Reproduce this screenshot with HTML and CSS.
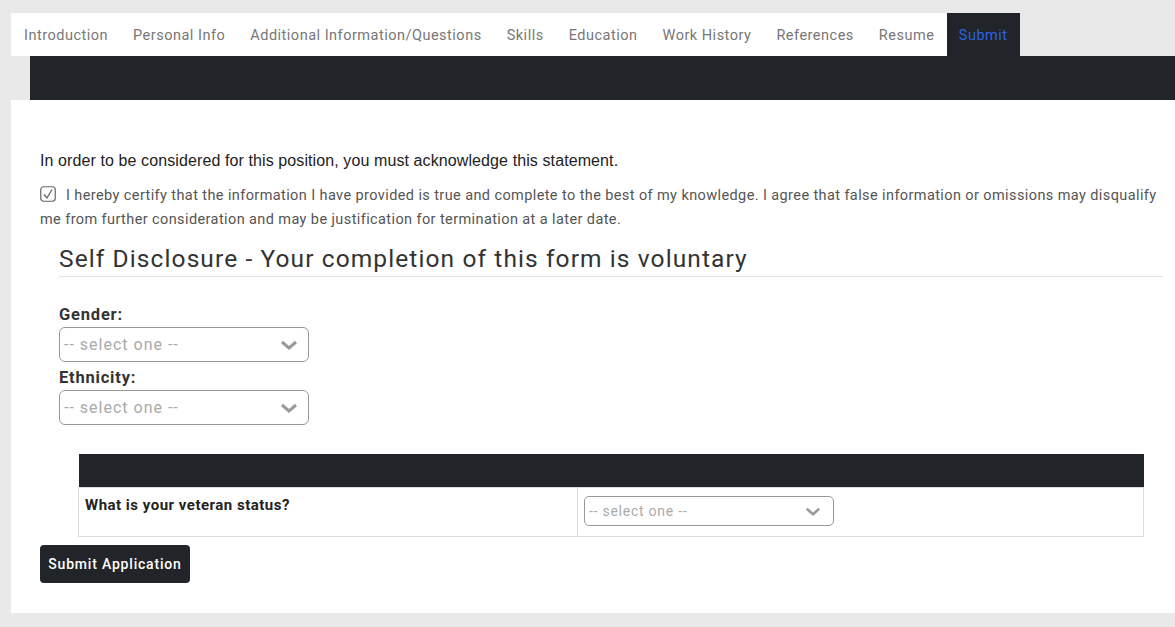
FILE: index.html
```html
<!DOCTYPE html>
<html>
<head>
    <title>Application - Submit</title>
    <link rel="stylesheet" href="styles.css">
</head>
<body>
    <!-- Step tabs -->
    <ul class="steps">
        <li class="step">Introduction</li>
        <li class="step">Personal Info</li>
        <li class="step">Additional Information/Questions</li>
        <li class="step">Skills</li>
        <li class="step">Education</li>
        <li class="step">Work History</li>
        <li class="step">References</li>
        <li class="step">Resume</li>
        <li class="step step-active">Submit</li>
    </ul>
    <div class="step-band"></div>

    <div class="panel">
        <p class="notice">In order to be considered for this position, you must acknowledge this statement.</p>
        <p class="certify">
            <svg class="check" width="16" height="16" viewBox="0 0 16 16">
                <rect x="0.75" y="0.75" width="14.5" height="14.5" rx="3" fill="none" stroke="#666" stroke-width="1.2"/>
                <path d="M4 8.5 L7 12 L12 3.5" fill="none" stroke="#666" stroke-width="1.3"/>
            </svg>
            I hereby certify that the information I have provided is true and complete to the best of my knowledge. I agree that false information or omissions may disqualify me from further consideration and may be justification for termination at a later date.
        </p>

        <div class="disclosure">
            <h2 class="disclosure-title">Self Disclosure - Your completion of this form is voluntary</h2>

            <div class="field">
                <label class="field-label">Gender:</label>
                <div class="select">
                    <span>-- select one --</span>
                    <svg width="18" height="10" viewBox="0 0 18 10"><path d="M2 2 L9 8 L16 2" fill="none" stroke="#9a9a9a" stroke-width="3"/></svg>
                </div>
            </div>
            <div class="field">
                <label class="field-label">Ethnicity:</label>
                <div class="select">
                    <span>-- select one --</span>
                    <svg width="18" height="10" viewBox="0 0 18 10"><path d="M2 2 L9 8 L16 2" fill="none" stroke="#9a9a9a" stroke-width="3"/></svg>
                </div>
            </div>

            <table class="vet-table">
                <thead>
                    <tr><th colspan="2"></th></tr>
                </thead>
                <tbody>
                    <tr>
                        <td class="vet-q">What is your veteran status?</td>
                        <td>
                            <div class="select select-sm">
                                <span>-- select one --</span>
                                <svg width="16" height="9" viewBox="0 0 18 10"><path d="M2 2 L9 8 L16 2" fill="none" stroke="#9a9a9a" stroke-width="3"/></svg>
                            </div>
                        </td>
                    </tr>
                </tbody>
            </table>
        </div>

        <button class="submit-btn">Submit Application</button>
    </div>
</body>
</html>
```

FILE: styles.css
```css
/* Page */
body {
    margin: 0;
    padding: 13px 0 14px 11px;
    background: #e9e9e9;
    font-family: "Roboto", "Liberation Sans", sans-serif;
    color: #333;
    width: 1250px;
}

/* Step tabs */
.steps {
    display: flex;
    list-style: none;
    margin: 0;
    padding: 0;
    height: 43px;
}

.step {
    background: #fff;
    color: #777;
    font-size: 14.5px;
    letter-spacing: 0.5px;
    padding: 2px 12.5px 0;
    line-height: 41px;
}

.step:first-child {
    padding-left: 13px;
}

.step-active {
    background: #212428;
    color: #2b62e6;
    padding: 2px 12px 0;
}

.step-band {
    height: 44px;
    margin-left: 19px;
    background: #212428;
}

/* Main panel */
.panel {
    background: #fff;
    padding: 52px 0 30px 29px;
}

.notice {
    font-family: "Liberation Sans", Arial, sans-serif;
    font-size: 16px;
    color: #222;
    margin: 0 0 14px;
    letter-spacing: 0.1px;
}

.certify {
    font-size: 14.5px;
    letter-spacing: 0.4px;
    line-height: 24px;
    color: #555;
    margin: 0;
    width: 1125px;
}

.check {
    vertical-align: -2px;
    margin-right: 6px;
}

/* Self disclosure */
.disclosure {
    padding-left: 19px;
    width: 1104px;
}

.disclosure-title {
    font-weight: 400;
    font-size: 24.5px;
    letter-spacing: 1.1px;
    color: #333;
    margin: 12px 0 0;
    padding-bottom: 3px;
    border-bottom: 1px solid #e3e3e3;
}

.field {
    margin-top: 28px;
}

.field + .field {
    margin-top: 6px;
}

.field-label {
    display: block;
    font-weight: 700;
    font-size: 16.5px;
    letter-spacing: 0.8px;
    line-height: 19px;
    color: #333;
    margin-bottom: 3px;
}

.select {
    display: flex;
    align-items: center;
    justify-content: space-between;
    box-sizing: border-box;
    width: 250px;
    height: 35px;
    border: 1px solid #999;
    border-radius: 6px;
    padding: 0 10px 0 4px;
    color: #aaa;
    font-size: 16px;
    letter-spacing: 1px;
}

/* Veteran table */
.vet-table {
    margin: 29px 0 0 19px;
    width: 1066px;
    border-collapse: collapse;
}

.vet-table th {
    background: #212428;
    height: 33px;
    padding: 0;
}

.vet-table td {
    border: 1px solid #ddd;
    vertical-align: top;
    padding: 8px 6px;
    height: 32px;
}

.vet-q {
    width: 486px;
    font-weight: 700;
    font-size: 15px;
    letter-spacing: 0.5px;
    line-height: 18px;
    color: #222;
}

.select-sm {
    height: 30px;
    font-size: 14px;
    letter-spacing: 0.75px;
    border-radius: 5px;
    padding: 0 12px 0 4px;
}

.submit-btn {
    margin-top: 8px;
    background: #212428;
    color: #fff;
    border: none;
    border-radius: 4px;
    font-family: inherit;
    font-size: 14px;
    font-weight: 500;
    letter-spacing: 0.8px;
    padding: 0;
    height: 38px;
    width: 150px;
}
```
